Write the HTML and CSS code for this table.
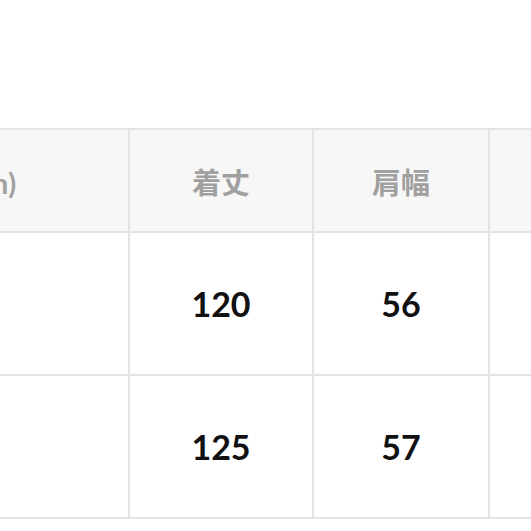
FILE: index.html
```html
<!DOCTYPE html>
<html lang="ja">
<head>
<meta charset="utf-8">
<link rel="stylesheet" href="styles.css">
</head>
<body>
<div class="page">
  <table class="size-table">
    <colgroup>
      <col class="c1"><col class="c2"><col class="c3"><col class="c4">
    </colgroup>
    <thead>
      <tr class="head">
        <th>サイズ(cm)</th>
        <th>着丈</th>
        <th>肩幅</th>
        <th>身幅</th>
      </tr>
    </thead>
    <tbody>
      <tr class="row">
        <td>M</td>
        <td>120</td>
        <td>56</td>
        <td>60</td>
      </tr>
      <tr class="row">
        <td>L</td>
        <td>125</td>
        <td>57</td>
        <td>62</td>
      </tr>
    </tbody>
  </table>
</div>
</body>
</html>
```
FILE: styles.css
```css
html, body {
  margin: 0;
  padding: 0;
  background: #ffffff;
  overflow: hidden;
}
.page {
  width: 531px;
  height: 531px;
  overflow: hidden;
  padding-top: 128px;
  box-sizing: border-box;
}
.size-table {
  border-collapse: collapse;
  table-layout: fixed;
  margin-left: -238px;
  width: 988px;
}
.c1 { width: 366px; }
.c2 { width: 184px; }
.c3 { width: 176px; }
.c4 { width: 262px; }
.size-table th,
.size-table td {
  border: 2px solid #e4e4e4;
  text-align: center;
  padding: 0;
}
.head th {
  height: 101px;
  background: #f7f7f7;
  color: #a0a0a0;
  font-family: "Lato", "Noto Sans CJK JP", sans-serif;
  font-weight: 700;
  font-size: 29px;
}
.row td {
  height: 141px;
  color: #111111;
  font-family: "Lato", sans-serif;
  font-weight: 700;
  font-size: 34px;
}
.row td:first-child,
.row td:last-child {
  color: transparent;
}
```
